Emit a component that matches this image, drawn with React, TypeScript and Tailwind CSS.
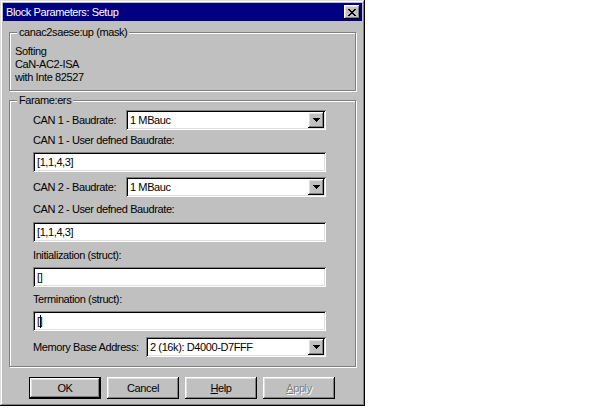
import React from "react";

const raised =
  "shadow-[inset_-1px_-1px_#000,inset_1px_1px_#fff,inset_-2px_-2px_#808080,inset_2px_2px_#dfdfdf]";
const sunken =
  "shadow-[inset_1px_1px_#808080,inset_-1px_-1px_#fff,inset_2px_2px_#000,inset_-2px_-2px_#dfdfdf]";

function DropArrow() {
  return (
    <svg width="7" height="4" viewBox="0 0 7 4">
      <path d="M0 0h7v1H0zM1 1h5v1H1zM2 2h3v1H2zM3 3h1v1H3z" fill="#000" />
    </svg>
  );
}

function Select({ value, width }: { value: string; width: string }) {
  return (
    <div className={`${width} ml-auto h-[20px] bg-white flex items-center pl-[4px] pr-[2px] ${sunken}`}>
      <span className="flex-1 whitespace-nowrap">{value}</span>
      <div className={`w-[16px] h-[16px] bg-[#c0c0c0] flex items-center justify-center ${raised}`}>
        <DropArrow />
      </div>
    </div>
  );
}

function Field({ value, caret }: { value: string; caret?: boolean }) {
  return (
    <div className={`h-[20px] bg-white flex items-center pl-[4px] ${sunken}`}>
      <span className="whitespace-nowrap">{value}</span>
      {caret && <span className="w-[1px] h-[13px] bg-black ml-[-2px]" />}
    </div>
  );
}

function Button({ label, def, disabled }: { label: React.ReactNode; def?: boolean; disabled?: boolean }) {
  return (
    <div className={`w-[72px] h-[22px] ${def ? "border border-black" : ""}`}>
      <div
        className={`w-full h-full bg-[#c0c0c0] flex items-center justify-center ${raised} ${
          disabled ? "text-[#808080] [text-shadow:1px_1px_0_#fff]" : ""
        }`}
      >
        {label}
      </div>
    </div>
  );
}

export default function App() {
  return (
    <div className="w-[600px] h-[411px] bg-white font-['Liberation_Sans',Arial,sans-serif] text-[11px] leading-[13px] tracking-[-0.4px] text-black">
      <div className="w-[365px] h-[406px] bg-[#c0c0c0] p-[3px] flex flex-col shadow-[inset_-1px_-1px_#000,inset_1px_1px_#dfdfdf,inset_-2px_-2px_#808080,inset_2px_2px_#fff]">
        {/* title bar */}
        <div className="h-[18px] bg-[#000080] flex items-center pl-[3px] pr-[2px] text-white">
          <span className="flex-1">Block Parameters: Setup</span>
          <div className={`w-[16px] h-[14px] bg-[#c0c0c0] flex items-center justify-center ${raised}`}>
            <svg width="8" height="7" viewBox="0 0 8 7">
              <path d="M0 0h2v1h1v1h2V1h1V0h2v1H7v1H6v1H5v1h1v1h1v1h1v1H6V6H5V5H3v1H2v1H0V6h1V5h1V4h1V3H2V2H1V1H0z" fill="#000" />
            </svg>
          </div>
        </div>

        <div className="px-[6px] flex flex-col">
          {/* mask group */}
          <fieldset className="mt-[5px] border border-[#808080] shadow-[1px_1px_0_#fff,inset_1px_1px_0_#fff]">
            <legend className="ml-[7px] px-[2px] bg-[#c0c0c0]">canac2saese:up (mask)</legend>
            <div className="pt-[6px] pb-[6px] pl-[5px]">
              <div>Softing</div>
              <div>CaN-AC2-ISA</div>
              <div>with Inte 82527</div>
            </div>
          </fieldset>

          {/* parameters group */}
          <fieldset className="mt-[3px] border border-[#808080] shadow-[1px_1px_0_#fff,inset_1px_1px_0_#fff]">
            <legend className="ml-[7px] px-[2px] bg-[#c0c0c0]">Farame:ers</legend>
            <div className="pt-[3px] pb-[9px] pl-[23px] pr-[29px] flex flex-col">
              <div className="flex items-center">
                <span>CAN 1 - Baudrate:</span>
                <Select value="1 MBauc" width="w-[200px]" />
              </div>
              <div className="mt-[4px]">CAN 1 - User defned Baudrate:</div>
              <div className="mt-[5px]">
                <Field value="[1,1,4,3]" />
              </div>
              <div className="mt-[5px] flex items-center">
                <span>CAN 2 - Baudrate:</span>
                <Select value="1 MBauc" width="w-[200px]" />
              </div>
              <div className="mt-[6px]">CAN 2 - User defned Baudrate:</div>
              <div className="mt-[6px]">
                <Field value="[1,1,4,3]" />
              </div>
              <div className="mt-[7px]">Initialization (struct):</div>
              <div className="mt-[5px]">
                <Field value="[]" />
              </div>
              <div className="mt-[6px]">Termination (struct):</div>
              <div className="mt-[5px]">
                <Field value="[]" caret />
              </div>
              <div className="mt-[6px] flex items-center">
                <span>Memory Base Address:</span>
                <Select value="2 (16k): D4000-D7FFF" width="w-[180px]" />
              </div>
            </div>
          </fieldset>
        </div>

        {/* buttons */}
        <div className="mt-[10px] pl-[26px] flex gap-[6px]">
          <Button label="OK" def />
          <Button label="Cancel" />
          <Button label={<span><span className="underline">H</span>elp</span>} />
          <Button label={<span><span className="underline">A</span>pply</span>} disabled />
        </div>
      </div>
    </div>
  );
}
